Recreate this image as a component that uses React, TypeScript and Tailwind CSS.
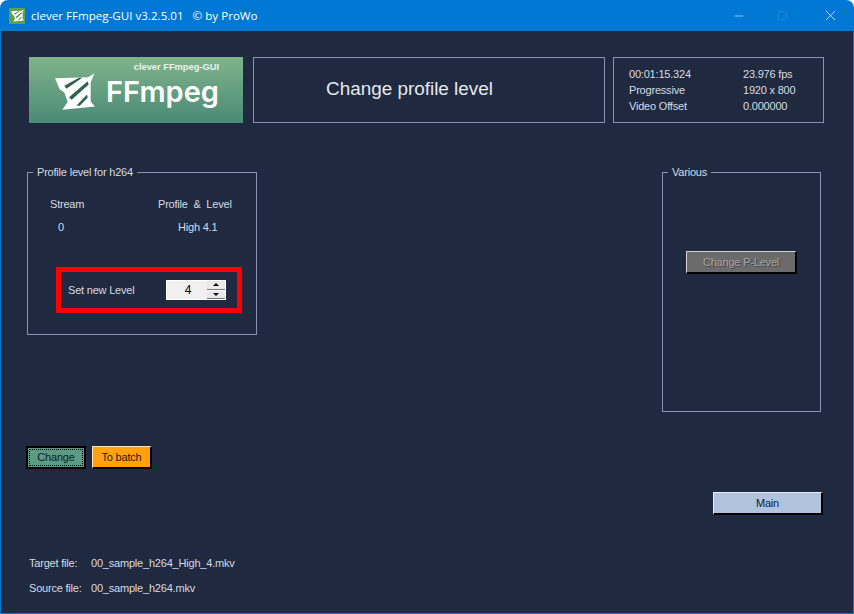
import { Minus, Square, X } from 'lucide-react'

const FONT = "font-['Liberation_Sans',Arial,sans-serif]"
const SMALL = 'text-[11px] tracking-[-0.2px]'

function FFmpegMark({ className, stripe }: { className: string; stripe: string }) {
  return (
    <svg viewBox="0 0 120 110" className={className}>
      <polygon fill="#fff" points="0,15 100,12 118,0 107,28 107,85 120,100 22,110 38,86 28,58 14,48" />
      <polygon fill={stripe} points="28,38 72,14 82,14 34,47" />
      <polygon fill={stripe} points="42,72 98,24 101,34 50,80" />
      <polygon fill={stripe} points="64,98 96,64 98,74 74,98" />
    </svg>
  )
}

function Raised({ children, className }: { children: React.ReactNode; className: string }) {
  return (
    <div className={`flex items-center justify-center border-t border-l border-r-2 border-b-2 border-t-white/70 border-l-white/70 border-r-black border-b-black ${SMALL} ${className}`}>
      {children}
    </div>
  )
}

function SpinButton({ points }: { points: string }) {
  return (
    <div className="flex flex-1 items-center justify-center border-b border-[#777] bg-[#e8e8e8]">
      <svg viewBox="0 0 6 3" className="h-[3px] w-[6px]">
        <polygon points={points} fill="#000" />
      </svg>
    </div>
  )
}

export default function App() {
  return (
    <div className={`flex h-[614px] w-[854px] flex-col overflow-hidden rounded-t-lg bg-[#0078d4] text-[#d8dbe2] ${FONT}`}>
      {/* Title bar */}
      <div className="flex h-[31px] shrink-0 items-center pl-[9px] text-white">
        <div className="flex h-[16px] w-[16px] items-center justify-center bg-[#5fa04e]">
          <FFmpegMark className="h-[13px] w-[13px]" stripe="#3f7a36" />
        </div>
        <span className="ml-[6px] whitespace-pre font-['Open_Sans',sans-serif] text-[11.6px]">clever FFmpeg-GUI v3.2.5.01   © by ProWo</span>
        <div className="ml-auto flex items-center">
          <Minus size={14} strokeWidth={1} className="mr-[31px]" />
          <Square size={11} strokeWidth={1} className="mr-[34px] text-[#3d9be3]" />
          <X size={17} strokeWidth={1} className="mr-[15px]" />
        </div>
      </div>

      {/* Client area */}
      <div className="mx-px mb-px flex flex-1 flex-col bg-[#1f2a40] pl-[25px] pt-[26px] pr-[29px]">
        <div className="flex h-[66px] items-stretch">
          <div className="ml-[3px] w-[214px] bg-gradient-to-b from-[#7fb48b] to-[#4a8a77] pl-[26px] pt-[5px] text-white">
            <div className="pr-[24px] text-right text-[9.3px] font-bold leading-[11px] text-white/85">clever FFmpeg-GUI</div>
            <div className="flex items-center">
              <FFmpegMark className="h-[37px] w-[40px]" stripe="#2f6350" />
              <span className="ml-[11px] font-['Inter',sans-serif] text-[29px] font-semibold leading-[36px]">FFmpeg</span>
            </div>
          </div>
          <div className="ml-[10px] flex w-[352px] items-center border border-[#8a93ad] pb-[2px] pl-[72px] text-[18.9px] text-[#e6e8ec]">
            Change profile level
          </div>
          <div className={`ml-[8px] grid w-[211px] grid-cols-[114px_1fr] content-center border border-[#8a93ad] pl-[15px] leading-[16px] ${SMALL}`}>
            <span>00:01:15.324</span>
            <span>23.976 fps</span>
            <span>Progressive</span>
            <span>1920 x 800</span>
            <span>Video Offset</span>
            <span>0.000000</span>
          </div>
        </div>

        <div className="mt-[41px] flex items-start justify-between">
          <fieldset className="ml-px h-[171px] w-[230px] border border-[#8a93ad] px-[5px]">
            <legend className={`px-[4px] leading-[16px] ${SMALL}`}>Profile level for h264</legend>
            <div className={`grid grid-cols-[111px_1fr] leading-[16px] ${SMALL}`}>
              <span className="mt-[16px] pl-[17px]">Stream</span>
              <span className="mt-[16px] pl-[14px]">Profile&nbsp; &amp;&nbsp; Level</span>
              <span className="mt-[7px] pl-[25px]">0</span>
              <span className="mt-[7px] pl-[34px]">High 4.1</span>
            </div>
            <div className={`ml-[23px] mt-[32px] flex h-[46px] w-[186px] items-center border-[5px] border-[#ff0000] pl-[7px] ${SMALL}`}>
              <span className="w-[98px]">Set new Level</span>
              <div className="flex h-[20px] w-[60px] border border-white bg-[#f0f0f0] text-xs text-black">
                <span className="flex-1 pl-[2px] text-center leading-[19px]">4</span>
                <div className="flex w-[18px] flex-col gap-px bg-white">
                  <SpinButton points="3,0 6,3 0,3" />
                  <SpinButton points="0,0 6,0 3,3" />
                </div>
              </div>
            </div>
          </fieldset>

          <fieldset className="mr-[3px] h-[248px] w-[159px] border border-[#8a93ad] px-[5px]">
            <legend className={`px-[4px] leading-[16px] ${SMALL}`}>Various</legend>
            <Raised className="ml-[18px] mt-[71px] h-[23px] w-[111px] bg-[#6b6b6b] text-[#a5a5a5] [text-shadow:1px_1px_0_#444]">Change P-Level</Raised>
          </fieldset>
        </div>

        <div className="mt-[34px] flex gap-[6px]">
          <div className={`flex h-[23px] w-[60px] items-center justify-center border-2 border-black bg-[#5b9a83] p-px text-[#10241c] ${SMALL}`}>
            <span className="flex h-full w-full items-center justify-center border border-dotted border-black">Change</span>
          </div>
          <Raised className="h-[23px] w-[60px] bg-[#ffa20e] text-[#2a1800]">To batch</Raised>
        </div>

        <div className="mt-[23px] flex justify-end">
          <Raised className="mr-px h-[23px] w-[110px] bg-[#b0c4de] text-[#10182a]">Main</Raised>
        </div>

        <div className={`mt-[40px] grid grid-cols-[62px_1fr] gap-y-[9px] pl-[3px] leading-[16px] ${SMALL}`}>
          <span>Target file:</span>
          <span>00_sample_h264_High_4.mkv</span>
          <span>Source file:</span>
          <span>00_sample_h264.mkv</span>
        </div>
      </div>
    </div>
  )
}
